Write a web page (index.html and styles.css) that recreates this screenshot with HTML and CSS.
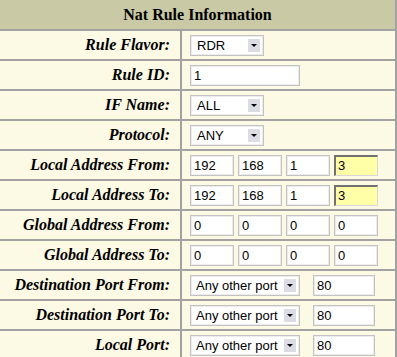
FILE: index.html
```html
<!DOCTYPE html>
<html>
<head>
<meta charset="utf-8">
<link rel="stylesheet" href="styles.css">
</head>
<body>
<table class="nat">
  <tr><th colspan="2" class="head">Nat Rule Information</th></tr>
  <tr><td class="lbl">Rule Flavor:</td><td class="val"><span class="sel w74"><span class="st">RDR</span><span class="btn"><i></i></span></span></td></tr>
  <tr><td class="lbl">Rule ID:</td><td class="val"><span class="inp w110">1</span></td></tr>
  <tr><td class="lbl">IF Name:</td><td class="val"><span class="sel w74"><span class="st">ALL</span><span class="btn"><i></i></span></span></td></tr>
  <tr><td class="lbl">Protocol:</td><td class="val"><span class="sel w74"><span class="st">ANY</span><span class="btn"><i></i></span></span></td></tr>
  <tr><td class="lbl">Local Address From:</td><td class="val"><div class="ip"><span class="inp w44">192</span><span class="inp w44">168</span><span class="inp w44">1</span><span class="inp w44 hi">3</span></div></td></tr>
  <tr><td class="lbl">Local Address To:</td><td class="val"><div class="ip"><span class="inp w44">192</span><span class="inp w44">168</span><span class="inp w44">1</span><span class="inp w44 hi">3</span></div></td></tr>
  <tr><td class="lbl">Global Address From:</td><td class="val"><div class="ip"><span class="inp w44">0</span><span class="inp w44">0</span><span class="inp w44">0</span><span class="inp w44">0</span></div></td></tr>
  <tr><td class="lbl">Global Address To:</td><td class="val"><div class="ip"><span class="inp w44">0</span><span class="inp w44">0</span><span class="inp w44">0</span><span class="inp w44">0</span></div></td></tr>
  <tr><td class="lbl">Destination Port From:</td><td class="val"><div class="port"><span class="sel w110"><span class="st">Any other port</span><span class="btn"><i></i></span></span><span class="inp w62">80</span></div></td></tr>
  <tr><td class="lbl">Destination Port To:</td><td class="val"><div class="port"><span class="sel w110"><span class="st">Any other port</span><span class="btn"><i></i></span></span><span class="inp w62">80</span></div></td></tr>
  <tr><td class="lbl">Local Port:</td><td class="val"><div class="port"><span class="sel w110"><span class="st">Any other port</span><span class="btn"><i></i></span></span><span class="inp w62">80</span></div></td></tr>
</table>
</body>
</html>
```
FILE: styles.css
```css
html, body { margin: 0; padding: 0; background: #ffffff; }
.nat {
  border-collapse: collapse;
  width: 397px;
  background: #fcf9e5;
  font-family: "Liberation Serif", "Times New Roman", serif;
}
.nat td, .nat th { padding: 0; }
.head {
  height: 29px;
  background: #c9c9a6;
  font-size: 16px;
  font-weight: bold;
  color: #000;
  text-align: center;
  border-bottom: 2px solid #a2a2a2;
  border-right: 2px solid #a2a2a2;
}
.nat tr td { height: 28px; border-bottom: 2px solid #a2a2a2; }
.lbl {
  width: 170px;
  padding-right: 10px !important;
  text-align: right;
  font-size: 16px;
  font-weight: bold;
  font-style: italic;
  color: #000;
  border-right: 2px solid #a2a2a2;
  vertical-align: middle;
}
.val {
  padding-left: 8px !important;
  border-right: 2px solid #a2a2a2;
  vertical-align: middle;
}
.inp, .sel {
  display: inline-flex;
  align-items: center;
  box-sizing: border-box;
  height: 21px;
  background: #fff;
  border: 1px solid #c2c2c2;
  box-shadow: inset 0 0 0 1px #ececec;
  font-family: "Liberation Sans", Arial, sans-serif;
  font-size: 13px;
  color: #000;
  vertical-align: middle;
  padding-left: 3px;
}
.w110 { width: 110px; }
.w74 { width: 74px; }
.w44 { width: 44px; }
.w62 { width: 62px; }
.sel { padding-left: 6px; position: relative; }
.sel.w110 { padding-left: 5px; }
.st { flex: 1; white-space: nowrap; }
.btn {
  width: 14px;
  height: 15px;
  margin-right: 2px;
  background: #dcdce4;
  border: 1px solid #ffffff;
  box-sizing: border-box;
  display: flex;
  align-items: center;
  justify-content: center;
}
.btn i {
  width: 0; height: 0;
  border-left: 3px solid transparent;
  border-right: 3px solid transparent;
  border-top: 3px solid #000;
}
.ip { display: flex; gap: 4px; }
.port { display: flex; gap: 13px; }
.hi {
  background: #ffffa8;
  border-top: 2px solid #707070;
  border-left: 2px solid #707070;
  border-right: 1px solid #d8d8d8;
  border-bottom: 1px solid #d8d8d8;
  box-shadow: none;
  padding-left: 2px;
}
```
